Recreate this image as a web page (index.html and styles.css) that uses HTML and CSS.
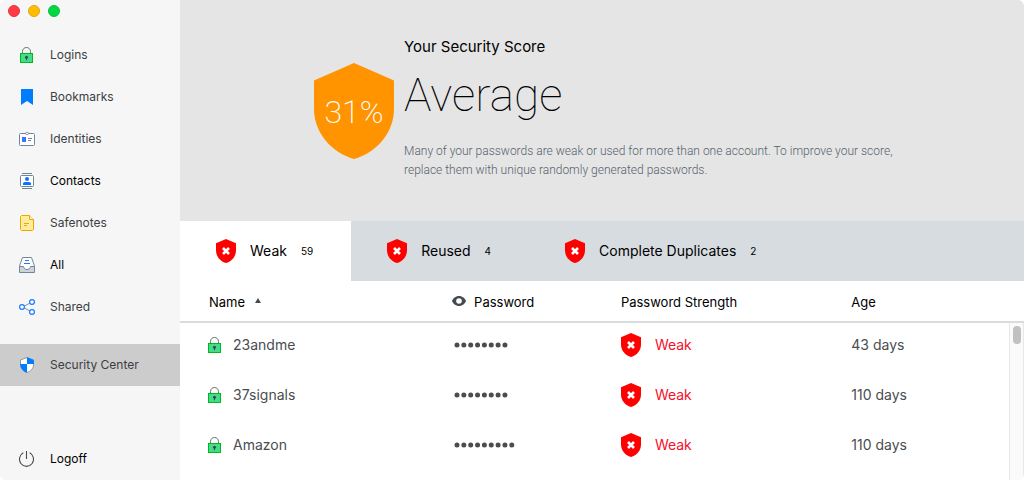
FILE: index.html
```html
<!DOCTYPE html>
<html lang="en">
<head>
<meta charset="utf-8">
<meta name="viewport" content="width=device-width, initial-scale=1">
<title>Security Center</title>
<link rel="stylesheet" href="styles.css">
</head>
<body>
<svg class="symbols" aria-hidden="true">
  <symbol id="lock" viewBox="0 0 14 16">
    <path d="M2.500 6V4.500C2.500 2 4.300.5 6.500.5S10.500 2 10.500 4.500V6" fill="none" stroke="#6d7073"/>
    <rect x=".5" y="6.500" width="12" height="9" fill="#43dc8b" stroke="#00b91a"/>
    <circle cx="6.500" cy="10.300" r="1.500" fill="#3c4a50"/><path d="M6 10.500h1v2.700h-1z" fill="#3c4a50"/>
  </symbol>
  <symbol id="alert" viewBox="0 0 20 24">
    <path d="M10 0L20 4.200V11.500C20 17.500 15.800 22.300 10 24C4.200 22.300 0 17.500 0 11.500V4.200Z" fill="#ff0000"/>
    <path d="M7 9l6 6M13 9l-6 6" stroke="#fff" stroke-width="2.600"/>
  </symbol>
</svg>
<div class="window">
  <aside class="sidebar">
    <div class="lights">
      <button class="light light-close" aria-label="Close"></button>
      <button class="light light-min" aria-label="Minimize"></button>
      <button class="light light-zoom" aria-label="Zoom"></button>
    </div>
    <nav class="nav">
      <a class="nav-item" href="#logins"><svg class="nav-icon" viewBox="0 0 16 16"><use href="#lock" x="1" y="0" width="14" height="16"/></svg>Logins</a>
      <a class="nav-item" href="#bookmarks"><svg class="nav-icon" viewBox="0 0 16 16"><path d="M2 0h12v16l-6-4-6 4z" fill="#007dff"/></svg>Bookmarks</a>
      <a class="nav-item" href="#identities"><svg class="nav-icon" viewBox="0 0 16 16"><rect x=".5" y="2.500" width="15" height="12" rx="1" fill="#fff" stroke="#75869a"/><rect x="6.500" y="1.500" width="3" height="2" rx="1" fill="#fff" stroke="#75869a"/><path d="M3 6h4v5H3z" fill="#3378ff"/><path d="M9 7.500h4M9 9.500h3" stroke="#75869a"/></svg>Identities</a>
      <a class="nav-item nav-strong" href="#contacts"><svg class="nav-icon" viewBox="0 0 16 16"><path d="M3 .5h10M3 15.500h10" stroke="#71858f"/><rect x="1.500" y="2.500" width="13" height="11" rx="1" fill="#fff" stroke="#71858f"/><circle cx="8" cy="6" r="2" fill="#0b71ff"/><path d="M4 12v-1.500C4 9 6 9 6.500 9h3c.5 0 2.500 0 2.500 1.500V12z" fill="#0b71ff"/></svg>Contacts</a>
      <a class="nav-item" href="#safenotes"><svg class="nav-icon" viewBox="0 0 16 16"><path d="M2.500.5h8l4 4v10l-1 1h-11l-1-1v-13z" fill="#ffec9f" stroke="#eba900"/><path d="M10.500.5v4h4" fill="#fff6d2" stroke="#eba900"/><path d="M5 8.500h5M5 10.500h3" stroke="#eba900"/></svg>Safenotes</a>
      <a class="nav-item nav-strong" href="#all"><svg class="nav-icon" viewBox="0 0 16 16"><path d="M.5 9L3.500.5h9l3 8.500-4 4h-7z" fill="#fff" stroke="#75869a"/><path d="M.5 9.500h4c.5 4 6.500 4 7 0h4v6H.5z" fill="#ced3da" stroke="#75869a"/><path d="M6 3.500h4M5 6.500h6" stroke="#2675ff"/></svg>All</a>
      <a class="nav-item" href="#shared"><svg class="nav-icon" viewBox="0 0 16 16"><path d="M5.500 7l5-2.700M5.500 9l5 2.700" stroke="#82909a"/><g fill="#fff" stroke="#1778ff" stroke-width="1.200"><circle cx="3" cy="8" r="2.400"/><circle cx="13" cy="3" r="2.400"/><circle cx="13" cy="13" r="2.400"/></g></svg>Shared</a>
      <a class="nav-item nav-current" href="#security" aria-current="page"><svg class="nav-icon" viewBox="0 0 16 16"><path d="M8 .5L14.500 3v5c0 3.500-3 6.300-6.500 7.500C4.500 14.300 1.500 11.500 1.500 8V3z" fill="#fff" stroke="#8a969f"/><path d="M8 .3L14.900 3v4H8zM8 7V15.800C4 14.300 1.200 11.500 1.200 7z" fill="#007dff"/></svg>Security Center</a>
    </nav>
    <button class="nav-item nav-strong logoff"><svg class="nav-icon" viewBox="0 0 16 16"><path d="M4.300 1.800A7 7.200 0 1 0 10.700 1.800M7.500 0v8" fill="none" stroke="#454b50" stroke-width="1.100"/></svg>Logoff</button>
  </aside>
  <main class="main">
    <section class="hero">
      <svg class="score" viewBox="0 0 80 96" role="img" aria-label="31%"><path d="M40 0L80 17.500V46C80 70 62 90 40 96C18 90 0 70 0 46V17.500Z" fill="#ff9300"/><text class="score-text" x="40" y="60" text-anchor="middle">31%</text></svg>
      <div class="summary">
        <h2 class="label">Your Security Score</h2>
        <p class="grade">Average</p>
        <p class="advice">Many of your passwords are weak or used for more than one account. To improve your score, replace them with unique randomly generated passwords.</p>
      </div>
    </section>
    <div class="tabs" role="tablist">
      <button class="tab tab-active" role="tab" aria-selected="true"><svg class="shield"><use href="#alert"/></svg>Weak<span class="count">59</span></button>
      <button class="tab" role="tab" aria-selected="false"><svg class="shield"><use href="#alert"/></svg>Reused<span class="count">4</span></button>
      <button class="tab" role="tab" aria-selected="false"><svg class="shield"><use href="#alert"/></svg>Complete Duplicates<span class="count">2</span></button>
    </div>
    <div class="list">
      <table class="table">
        <thead>
          <tr>
            <th class="col-name" scope="col" aria-sort="ascending"><span class="cell">Name<svg class="sort" viewBox="0 0 6 8"><path d="M3 0l3 5H0z" fill="#444b50"/></svg></span></th>
            <th class="col-pass" scope="col"><span class="cell"><svg class="eye" viewBox="0 0 14 12"><path d="M7 0c3.500 0 6 2.500 7 5-1 2.500-3.500 5-7 5S1 7.500 0 5c1-2.500 3.500-5 7-5z" fill="#444b50"/><circle cx="7" cy="5" r="2.800" fill="#fff"/></svg>Password</span></th>
            <th class="col-strength" scope="col">Password Strength</th>
            <th scope="col">Age</th>
          </tr>
        </thead>
        <tbody>
          <tr><td><span class="cell"><svg class="lock"><use href="#lock"/></svg>23andme</span></td><td><svg class="dots" viewBox="0 0 61 6"><path d="M3 3h48"/></svg></td><td><span class="cell weak"><svg class="shield"><use href="#alert"/></svg>Weak</span></td><td>43 days</td></tr>
          <tr><td><span class="cell"><svg class="lock"><use href="#lock"/></svg>37signals</span></td><td><svg class="dots" viewBox="0 0 61 6"><path d="M3 3h48"/></svg></td><td><span class="cell weak"><svg class="shield"><use href="#alert"/></svg>Weak</span></td><td>110 days</td></tr>
          <tr><td><span class="cell"><svg class="lock"><use href="#lock"/></svg>Amazon</span></td><td><svg class="dots" viewBox="0 0 61 6"><path d="M3 3h55"/></svg></td><td><span class="cell weak"><svg class="shield"><use href="#alert"/></svg>Weak</span></td><td>110 days</td></tr>
        </tbody>
      </table>
      <div class="scrollbar"><div class="thumb"></div></div>
    </div>
  </main>
</div>
</body>
</html>
```
FILE: styles.css
```css
* { box-sizing: border-box; }
body { margin: 0; background: #fff; font-family: Inter, "Liberation Sans", sans-serif; color: #000; }
button { font: inherit; color: inherit; border: 0; background: none; padding: 0; text-align: left; }
.symbols { position: absolute; width: 0; height: 0; }
.window { display: flex; min-height: 100vh; border-radius: 6px; overflow: hidden; }

.sidebar { flex: none; width: 180px; display: flex; flex-direction: column; background: #f6f6f6; }
.lights { display: flex; gap: 8px; height: 34px; padding: 5px 8px; }
.light { width: 12px; height: 12px; border-radius: 50%; border: 1px solid; }
.light-close { background: #ff3b47; border-color: #e2343f; }
.light-min { background: #ffbd00; border-color: #e2a610; }
.light-zoom { background: #00d742; border-color: #10bd3f; }
.nav-item { display: flex; align-items: center; gap: 15px; width: 100%; height: 42px; padding-left: 19px; font-size: 12px; line-height: 20px; color: #3c4043; text-decoration: none; }
.nav-strong { color: #000; }
.nav-icon { flex: none; width: 16px; height: 16px; }
.nav-current { margin-top: 16px; background: #cccccc; }
.logoff { margin-top: auto; }

.main { flex: 1; min-width: 0; display: flex; flex-direction: column; }
.hero { display: flex; justify-content: center; gap: 10px; min-height: 221px; padding: 37px 16px 40px 30px; background: #e5e5e5; }
.score { flex: none; width: 80px; height: 96px; margin-top: 26px; }
.score-text { font-family: Roboto, sans-serif; font-size: 32px; font-weight: 200; fill: #fff; }
.summary { width: 500px; }
.label { margin: 0; font-size: 15px; font-weight: 400; line-height: 20px; }
.grade { margin: 10px 0 19px; font-family: Roboto, sans-serif; font-size: 46px; font-weight: 100; line-height: 56px; }
.advice { margin: 0; font-family: Roboto, sans-serif; font-size: 12px; font-weight: 300; line-height: 19px; color: #55626d; }

.tabs { display: flex; background: #d7dce0; }
.tab { display: flex; align-items: center; height: 60px; padding: 0 38px 0 36px; font-size: 14px; line-height: 20px; }
.tab-active { background: #fff; }
.shield { flex: none; width: 20px; height: 24px; margin-right: 14px; }
.count { margin-left: 14px; font-size: 10px; }

.list { position: relative; flex: 1; }
.table { width: 100%; table-layout: fixed; border-collapse: separate; border-spacing: 0; font-size: 14px; line-height: 20px; color: #4a4d50; }
.table th { height: 42px; padding: 2px 2px 0; border-bottom: 2px solid #d7dce0; font-size: 13px; font-weight: 400; text-align: left; color: #000; }
.table td { height: 50px; padding: 0 2px; }
.table tbody tr:first-child td { height: 47px; padding-bottom: 3px; }
.table th:first-child { padding-left: 29px; }
.table td:first-child { padding-left: 28px; }
.col-name { width: 32%; }
.col-pass { width: 20%; }
.col-strength { width: 27.3%; }
.cell { display: flex; align-items: center; }
.sort { width: 6px; height: 8px; margin-left: 10px; }
.eye { width: 14px; height: 12px; margin-right: 8px; }
.lock { width: 14px; height: 16px; margin-right: 11px; }
.weak { color: #f5102e; }
.dots { display: block; width: 61px; height: 6px; margin-left: 2px; fill: none; stroke: #4a4d50; stroke-width: 5; stroke-linecap: round; stroke-dasharray: 0 6.850; }
.scrollbar { position: absolute; top: 42px; right: 0; bottom: 0; width: 15px; padding: 3px; border: solid #e8e8e8; border-width: 0 1px; background: #fafafa; }
.thumb { width: 8px; height: 18px; border-radius: 4px; background: #c1c1c1; }
```
